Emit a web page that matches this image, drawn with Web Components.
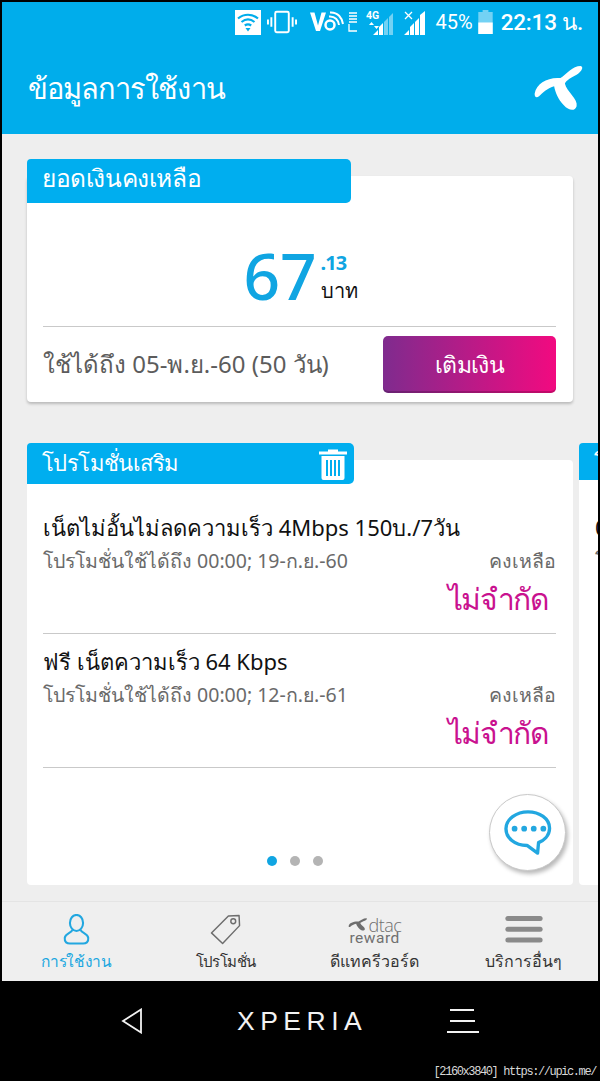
<!DOCTYPE html>
<html lang="th">
<head>
<meta charset="utf-8">
<title>dtac</title>
<style>
	html, body { margin: 0; padding: 0; background: #000; }
	body { width: 600px; height: 1081px; overflow: hidden; }
</style>
</head>
<body>
<app-shell>
	<status-bar></status-bar>
	<title-bar>ข้อมูลการใช้งาน</title-bar>
	<main-area>
		<balance-card></balance-card>
		<promo-carousel>
			<promo-item name="เน็ตไม่อั้นไม่ลดความเร็ว 4Mbps 150บ./7วัน" until="โปรโมชั่นใช้ได้ถึง 00:00; 19-ก.ย.-60"></promo-item>
			<promo-item name="ฟรี เน็ตความเร็ว 64 Kbps" until="โปรโมชั่นใช้ได้ถึง 00:00; 12-ก.ย.-61"></promo-item>
		</promo-carousel>
	</main-area>
	<bottom-nav></bottom-nav>
	<soft-keys></soft-keys>
</app-shell>

<script>
const FONT = '"Noto Sans", "Open Sans", Roboto, sans-serif';
const DTAC_LOGO = 'M1005 280C1010 250 1045 230 1082 234C1100 222 1118 198 1142 198C1152 200 1146 214 1130 224C1115 232 1100 240 1095 250C1100 275 1135 295 1130 318C1125 335 1105 330 1092 315C1075 297 1066 275 1063 258C1045 262 1028 278 1018 288C1010 294 1004 290 1005 280z';

class AppShell extends HTMLElement {
	constructor() {
		super();
		this.attachShadow({ mode: 'open' });
		this.shadowRoot.innerHTML = `
			<style>
				:host { display: flex; flex-direction: column; width: 600px; height: 1081px; box-sizing: border-box; padding: 2px 2px 0 2px; font-family: ${FONT}; }
			</style>
			<slot></slot>
		`;
	}
}

class StatusBar extends HTMLElement {
	constructor() {
		super();
		this.attachShadow({ mode: 'open' });
		this.shadowRoot.innerHTML = `
			<style>
				:host { display: flex; align-items: center; height: 40px; padding-right: 15px; box-sizing: border-box; justify-content: flex-end; background: #00adeb; color: #fff; }
				svg { display: block; flex: none; }
				.pct { font: 20px Roboto, sans-serif; margin: 0 5px 0 8px; }
				.time { font: 500 22.5px Roboto, "Noto Sans", sans-serif; letter-spacing: -.2px; margin-left: 8px; white-space: nowrap; }
			</style>
			<svg width="26" height="25" viewBox="0 0 26 25" style="margin-right:6px">
				<rect width="26" height="25" fill="#fff"/>
				<path d="M3 8.500C9 3.500 17 3.500 23 8.500M6.500 12C10.500 8.800 15.500 8.800 19.500 12M9.800 15.500C11.800 14 14.200 14 16.200 15.500" fill="none" stroke="#00adeb" stroke-width="2.200"/>
				<path d="M10.500 18h5l-2.500 3.500z" fill="#00adeb"/>
			</svg>
			<svg width="30" height="24" viewBox="0 0 31 24" style="margin-right:13px">
				<rect x="8.500" y="1.500" width="14" height="21" rx="1.500" fill="none" stroke="#fff" stroke-width="2"/>
				<path d="M4.500 7v10M1 9.500v5M26.500 7v10M30 9.500v5" stroke="#fff" stroke-width="2"/>
			</svg>
			<svg width="47" height="25" viewBox="0 0 47 25" style="margin-right:9px">
				<path d="M0 2.500h4.500l3.500 13 3.500-13H16L10 21H6z" fill="#fff"/>
				<circle cx="20" cy="15" r="4.500" fill="none" stroke="#fff" stroke-width="2.500"/>
				<path d="M19 6.500C25 6 28.500 10 29 15M20 2.500C28 2 32 8 33 14" fill="none" stroke="#fff" stroke-width="2"/>
				<path d="M39 3h8M39 6h8M39 9h8M39 12h8M39 14v7h8" fill="none" stroke="#fff" stroke-width="1.300"/>
			</svg>
			<svg width="29" height="25" viewBox="0 0 29 25" style="margin-right:9px">
				<text x="0" y="9" font-family="Roboto" font-weight="700" font-size="10.500" fill="#fff">4G</text>
				<path d="M3 15l2.500-3 2.500 3zM8 16l2.500 3 2.500-3z" fill="#fff"/>
				<path d="M7 25l5-5v5zM13 25v-8l4-4v12z" fill="#fff"/>
				<path d="M18 25v-13l4-4v17zM23 25v-18l4-4v22z" fill="#fff" opacity=".45"/>
			</svg>
			<svg width="24" height="25" viewBox="0 0 24 25">
				<path d="M1 2l7 7M8 2l-7 7" stroke="#fff" stroke-width="1.300"/>
				<path d="M0 25l5-5v5zM6 25v-8l4-4v12zM11 25v-13l4-4v17zM16 25v-20l5-4v24z" fill="#fff"/>
			</svg>
			<span class="pct">45%</span>
			<svg width="15" height="24" viewBox="0 0 15 25">
				<path d="M4.500 0h6v2h4.500v23H0V2h4.500z" fill="#fff" opacity=".45"/>
				<path d="M0 13h15v12H0z" fill="#fff"/>
			</svg>
			<span class="time">22:13 น.</span>
		`;
	}
}

class TitleBar extends HTMLElement {
	constructor() {
		super();
		this.attachShadow({ mode: 'open' });
		this.shadowRoot.innerHTML = `
			<style>
				:host { display: flex; align-items: center; justify-content: space-between; height: 92px; padding: 0 13px 0 26px; box-sizing: border-box; background: #00adeb; color: #fff; }
				span { font-size: 29px; letter-spacing: -.95px; line-height: 1; padding-bottom: 2px; }
				svg { display: block; margin-top: 1px; }
			</style>
			<span><slot></slot></span>
			<svg width="52" height="47" viewBox="1000 195 155 140"><path d="${DTAC_LOGO}" fill="#fff"/></svg>
		`;
	}
}

class MainArea extends HTMLElement {
	constructor() {
		super();
		this.attachShadow({ mode: 'open' });
		this.shadowRoot.innerHTML = `
			<style>
				:host { display: flex; flex-direction: column; height: 767px; box-sizing: border-box; padding-top: 25px; background: #eeeeee; overflow: hidden; }
			</style>
			<slot></slot>
		`;
	}
}

class BalanceCard extends HTMLElement {
	constructor() {
		super();
		this.attachShadow({ mode: 'open' });
		this.shadowRoot.innerHTML = `
			<style>
				:host { display: block; margin: 0 25px; position: relative; padding-top: 17px; }
				.tab { position: absolute; z-index: 1; left: 0; top: 0; width: 324px; height: 44px; box-sizing: border-box; padding-left: 15px; background: #00aeef; border-radius: 4px 5px 5px 0; color: #fff; font-size: 24.5px; letter-spacing: -.4px; line-height: 38px; }
				.card { height: 226px; box-sizing: border-box; background: #fff; border-radius: 4px; box-shadow: 0 2px 3px rgba(0,0,0,.22); padding: 0 17px 0 16px; display: flex; flex-direction: column; }
				.amount { height: 151px; flex: none; box-sizing: border-box; border-bottom: 1px solid #c9c9c9; display: flex; justify-content: center; padding: 62px 0 0 2px; }
				.big { font-size: 64px; line-height: 76px; font-weight: 500; color: #10a5e2; }
				.side { display: flex; flex-direction: column; margin-left: 4px; padding-top: 11px; }
				.cents { font-size: 20px; line-height: 27px; font-weight: 700; letter-spacing: -1px; color: #10a5e2; }
				.unit { font-size: 20px; line-height: 30px; color: #111; }
				.foot { display: flex; align-items: center; justify-content: space-between; flex: 1; }
				.valid { font-size: 24px; color: #5c5c5c; white-space: nowrap; }
				.btn { width: 173px; height: 57px; border-radius: 5px; background: linear-gradient(90deg, #7f2b8e, #f20a80); box-shadow: inset 0 -2px 0 rgba(0,0,0,.18); color: #fff; font-size: 23px; letter-spacing: -.6px; display: flex; align-items: center; justify-content: center; }
			</style>
			<div class="tab">ยอดเงินคงเหลือ</div>
			<div class="card">
				<div class="amount">
					<span class="big">67</span>
					<span class="side"><span class="cents">.13</span><span class="unit">บาท</span></span>
				</div>
				<div class="foot">
					<span class="valid">ใช้ได้ถึง 05-พ.ย.-60 (50 วัน)</span>
					<span class="btn">เติมเงิน</span>
				</div>
			</div>
		`;
	}
}

class PromoCarousel extends HTMLElement {
	constructor() {
		super();
		this.attachShadow({ mode: 'open' });
		this.shadowRoot.innerHTML = `
			<style>
				:host { display: flex; gap: 6px; margin-top: 41px; padding-left: 25px; position: relative; }
				.slide { position: relative; padding-top: 17px; flex: none; width: 546px; }
				.tab { position: absolute; z-index: 1; left: 0; top: 0; width: 327px; height: 41px; box-sizing: border-box; padding: 0 6px 0 15px; background: #00aeef; border-radius: 4px 5px 5px 0; color: #fff; font-size: 22px; letter-spacing: -.6px; line-height: 38px; display: flex; justify-content: space-between; }
				.tab svg { margin-top: 5px; display: block; }
				.card { height: 425px; box-sizing: border-box; background: #fff; border-radius: 4px; padding: 40px 17px 0 16px; position: relative; }
				.peek .tab { height: 37px; }
				.peek .card { padding-top: 50px; white-space: nowrap; }
				.peek .a { font-size: 22px; line-height: 34px; color: #111; }
				.peek .b { font-size: 19.500px; line-height: 34px; color: #6a6a6a; }
				.dots { position: absolute; left: 0; right: 10px; bottom: 19px; display: flex; justify-content: center; gap: 13px; }
				.dots i { width: 10px; height: 10px; border-radius: 50%; background: #b4b4b4; }
				.dots i:first-child { background: #10a5e2; }
				.fab { position: absolute; left: 462px; top: 334px; width: 77px; height: 77px; box-sizing: border-box; border-radius: 50%; background: #fff; border: 1px solid #c9c9c9; box-shadow: 2px 3px 4px rgba(0,0,0,.28); display: flex; align-items: center; justify-content: center; }
			</style>
			<div class="slide">
				<div class="tab">
					<span>โปรโมชั่นเสริม</span>
					<svg width="30" height="32" viewBox="0 0 30 32">
						<path d="M10 3.500V1.500h10v2h9v3H1v-3z" fill="#fff"/>
						<path d="M3.500 8h23v22a2 2 0 0 1-2 2h-19a2 2 0 0 1-2-2z" fill="#fff"/>
						<path d="M9 12v16M13 12v16M17 12v16M21 12v16" stroke="#00aeef" stroke-width="2"/>
					</svg>
				</div>
				<div class="card">
					<slot></slot>
					<div class="dots"><i></i><i></i><i></i></div>
					<div class="fab">
						<svg width="48" height="46" viewBox="0 0 50 48">
							<path d="M25 2C37 2 47.500 9 47.500 19C47.500 27 41 32 36 34L35 45L24 37C11 37 2 29 2 19.500C2 9.500 13 2 25 2z" fill="none" stroke="#22a7e0" stroke-width="3.500" stroke-linejoin="round"/>
							<circle cx="11" cy="19.500" r="3" fill="#22a7e0"/><circle cx="21" cy="19.500" r="3" fill="#22a7e0"/><circle cx="31" cy="19.500" r="3" fill="#22a7e0"/><circle cx="41" cy="19.500" r="3" fill="#22a7e0"/>
						</svg>
					</div>
				</div>
			</div>
			<div class="slide peek">
				<div class="tab"><span>โ</span></div>
				<div class="card">
					<div class="a">0</div>
					<div class="b">โ</div>
				</div>
			</div>
		`;
	}
}

class PromoItem extends HTMLElement {
	constructor() {
		super();
		this.attachShadow({ mode: 'open' });
		this.shadowRoot.innerHTML = `
			<style>
				:host { display: block; height: 134px; box-sizing: border-box; padding-top: 10px; border-bottom: 1px solid #c9c9c9; }
				.name { font-size: 22px; line-height: 34px; color: #111; white-space: nowrap; }
				.row { display: flex; justify-content: space-between; font-size: 19.5px; line-height: 34px; color: #6a6a6a; white-space: nowrap; }
				.left { text-align: right; font-size: 30px; letter-spacing: -1.6px; line-height: 42px; color: #c9118f; padding-right: 9px; }
			</style>
			<div class="name"></div>
			<div class="row"><span class="until"></span><span>คงเหลือ</span></div>
			<div class="left">ไม่จำกัด</div>
		`;
		this.shadowRoot.querySelector('.name').textContent = this.getAttribute('name');
		this.shadowRoot.querySelector('.until').textContent = this.getAttribute('until');
	}
}

class NavItem extends HTMLElement {
	constructor() {
		super();
		this.attachShadow({ mode: 'open' });
		this.shadowRoot.innerHTML = `
			<style>
				:host { display: flex; flex-direction: column; align-items: center; flex: 1 1 0; min-width: 0; color: #333; font-size: 16px; line-height: 26px; white-space: nowrap; }
				:host([active]) { color: #1ba7e0; }
				.icon { height: 38px; margin-top: 8px; display: flex; align-items: center; justify-content: center; }
			</style>
			<div class="icon"><slot name="icon"></slot></div>
			<slot></slot>
		`;
	}
}

class BottomNav extends HTMLElement {
	constructor() {
		super();
		this.attachShadow({ mode: 'open' });
		this.shadowRoot.innerHTML = `
			<style>
				:host { display: flex; height: 80px; box-sizing: border-box; background: #efefef; border-top: 1px solid #e4e4e4; }
				.reward { display: block; width: 54px; height: 32px; position: relative; line-height: 1; letter-spacing: 0; }
				.reward svg { position: absolute; left: 0; top: 5px; }
				.reward b { position: absolute; white-space: nowrap; color: #6f6f6f; }
				.d { left: 21px; top: 7px; font: 300 18px/11px "Open Sans", sans-serif; letter-spacing: -.5px; }
				.r { left: 2px; top: 18.500px; font: 400 15.500px/13px Roboto, sans-serif; letter-spacing: .5px; }
			</style>
			<nav-item active style="font-size:15.5px;letter-spacing:-.3px">
				<svg slot="icon" width="27" height="31" viewBox="0 0 28 33" fill="none" stroke="#22a7e0" stroke-width="2.200">
					<ellipse cx="14" cy="9.500" rx="7" ry="8.500"/>
					<path d="M9.500 17C9 20 2 20.500 1.500 25.500C1 30 4 31.500 7 31.500H21C24 31.500 27 30 26.500 25.500C26 20.500 19 20 18.500 17"/>
				</svg>
				การใช้งาน
			</nav-item>
			<nav-item style="font-size:15px;letter-spacing:-.6px">
				<svg slot="icon" width="31" height="31" viewBox="0 0 32 32" fill="none" stroke="#6d6d6d" stroke-width="1.500">
					<path d="M19 2L30 1.500L30.500 12L13 30.500L1.500 19.500z" stroke-linejoin="round"/>
					<circle cx="24" cy="7.500" r="2.500"/>
				</svg>
				โปรโมชั่น
			</nav-item>
			<nav-item>
				<span slot="icon" class="reward">
					<svg width="20" height="13" viewBox="1000 195 155 140" preserveAspectRatio="none"><path d="${DTAC_LOGO}" fill="#6d6d6d"/></svg>
					<b class="d">dtac</b><b class="r">reward</b>
				</span>
				ดีแทครีวอร์ด
			</nav-item>
			<nav-item>
				<svg slot="icon" width="40" height="27" viewBox="0 0 40 29" fill="#8a8a8a">
					<rect y="0" width="40" height="5.500" rx="2.700"/><rect y="11.500" width="40" height="5.500" rx="2.700"/><rect y="23" width="40" height="5.500" rx="2.700"/>
				</svg>
				บริการอื่นๆ
			</nav-item>
		`;
	}
}

class SoftKeys extends HTMLElement {
	constructor() {
		super();
		this.attachShadow({ mode: 'open' });
		this.shadowRoot.innerHTML = `
			<style>
				:host { display: block; flex: 1; background: #000; color: #f2f2f2; position: relative; }
				.keys { display: flex; align-items: center; height: 80px; padding-left: 119px; }
				.logo { font: 400 26.5px "Liberation Sans", sans-serif; letter-spacing: 5.500px; margin-left: 95px; width: 210px; }
				.mark { position: absolute; right: 2px; bottom: 2px; font: 12px "Liberation Mono", monospace; color: #d8d8d8; letter-spacing: -1.400px; white-space: nowrap; }
			</style>
			<div class="keys">
				<svg width="21" height="26" viewBox="0 0 21 26" fill="none" stroke="#f2f2f2" stroke-width="1.800"><path d="M20 1.500L2 13l18 11.500z"/></svg>
				<span class="logo">XPERIA</span>
				<svg width="32" height="24" viewBox="0 0 32 24" stroke="#f2f2f2" stroke-width="1.800"><path d="M3 1h24M3 12h25M0 23h32"/></svg>
			</div>
			<div class="mark">[2160x3840] https://upic.me/</div>
		`;
	}
}

customElements.define('app-shell', AppShell);
customElements.define('status-bar', StatusBar);
customElements.define('title-bar', TitleBar);
customElements.define('main-area', MainArea);
customElements.define('balance-card', BalanceCard);
customElements.define('promo-carousel', PromoCarousel);
customElements.define('promo-item', PromoItem);
customElements.define('nav-item', NavItem);
customElements.define('bottom-nav', BottomNav);
customElements.define('soft-keys', SoftKeys);
</script>
</body>
</html>
